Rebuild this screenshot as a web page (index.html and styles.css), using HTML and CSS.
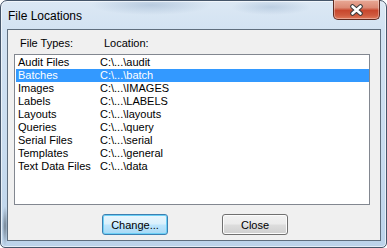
FILE: index.html
```html
<!DOCTYPE html>
<html lang="en">
<head>
    <meta charset="UTF-8">
    <meta name="viewport" content="width=device-width, initial-scale=1.0">
    <title>File Locations</title>
    <link rel="stylesheet" href="styles.css">
</head>
<body>
    <div class="window">
        <div class="titlebar">
            <span class="title">File Locations</span>
            <button class="close-button" title="Close">
                <svg width="15" height="12" viewBox="0 0 15 12">
                    <path d="M3.5 2.5 L11.5 9.5 M11.5 2.5 L3.5 9.5" stroke="#3a3a3a" stroke-width="4.6" stroke-linecap="round" fill="none"/>
                    <path d="M3.5 2.5 L11.5 9.5 M11.5 2.5 L3.5 9.5" stroke="#ffffff" stroke-width="2.6" stroke-linecap="round" fill="none"/>
                </svg>
            </button>
        </div>
        <div class="client">
            <div class="list-header">
                <span class="col-name">File Types:</span>
                <span>Location:</span>
            </div>
            <div class="listbox">
                <div class="row"><span class="col-name">Audit Files</span><span>C:\...\audit</span></div>
                <div class="row selected"><span class="col-name">Batches</span><span>C:\...\batch</span></div>
                <div class="row"><span class="col-name">Images</span><span>C:\...\IMAGES</span></div>
                <div class="row"><span class="col-name">Labels</span><span>C:\...\LABELS</span></div>
                <div class="row"><span class="col-name">Layouts</span><span>C:\...\layouts</span></div>
                <div class="row"><span class="col-name">Queries</span><span>C:\...\query</span></div>
                <div class="row"><span class="col-name">Serial Files</span><span>C:\...\serial</span></div>
                <div class="row"><span class="col-name">Templates</span><span>C:\...\general</span></div>
                <div class="row"><span class="col-name">Text Data Files</span><span>C:\...\data</span></div>
            </div>
            <div class="buttons">
                <button class="btn btn-default">Change...</button>
                <button class="btn">Close</button>
            </div>
        </div>
    </div>
</body>
</html>
```

FILE: styles.css
```css
body {
    margin: 0;
    background-color: #ffffff;
    font-family: "Liberation Sans", Arial, sans-serif;
}
.window {
    width: 387px;
    height: 248px;
    box-sizing: border-box;
    border: 1px solid #46566a;
    border-radius: 7px 7px 5px 5px;
    padding: 0 5px 6px 6px;
    display: flex;
    flex-direction: column;
    background:
        radial-gradient(ellipse 60px 10px at 150px 4px, rgba(120,150,185,0.35), transparent),
        radial-gradient(ellipse 40px 8px at 270px 6px, rgba(120,150,185,0.3), transparent),
        radial-gradient(ellipse 3px 20px at 4px 225px, rgba(40,50,60,0.5), transparent),
        linear-gradient(to bottom, #dce8f4 0%, #d2e2f2 12%, #c9dcef 60%, #bcd3ea 100%);
    box-shadow: inset 0 0 0 1px rgba(255,255,255,0.6);
}
.titlebar {
    height: 28px;
    display: flex;
    align-items: flex-start;
}
.title {
    font-size: 12px;
    line-height: 14px;
    padding-top: 8px;
    margin-left: 1px;
    color: #000;
}
.close-button {
    margin-left: auto;
    margin-top: -1px;
    margin-right: 1px;
    width: 47px;
    height: 20px;
    padding: 0;
    border: 1px solid #5f2a20;
    border-top: none;
    border-radius: 0 0 5px 5px;
    background: linear-gradient(to bottom, #e9a996 0%, #dc8a75 40%, #c8472d 55%, #cf5a3e 80%, #e07a5c 100%);
    box-shadow: inset 0 0 0 1px rgba(255,255,255,0.35);
    display: flex;
    align-items: center;
    justify-content: center;
}
.client {
    flex: 1;
    border: 1px solid #5f6e7e;
    background-color: #f0f0f0;
    font-size: 11px;
    color: #000;
}
.list-header {
    display: flex;
    padding: 7px 0 0 12px;
    line-height: 13px;
}
.list-header .col-name {
    width: 84px;
}
.listbox {
    margin: 4px 0 0 6px;
    width: 356px;
    height: 151px;
    box-sizing: border-box;
    border: 1px solid #828790;
    background-color: #ffffff;
    padding: 1px 0 1px 1px;
}
.row {
    display: flex;
    height: 13px;
    line-height: 13px;
    padding-left: 2px;
    white-space: nowrap;
}
.row .col-name {
    width: 82px;
}
.row.selected {
    background-color: #3399ff;
    color: #ffffff;
}
.buttons {
    display: flex;
    gap: 54px;
    margin-top: 9px;
    padding-left: 94px;
}
.btn {
    width: 66px;
    height: 21px;
    padding: 0;
    font-family: "Liberation Sans", Arial, sans-serif;
    font-size: 11px;
    color: #000;
    border: 1px solid #707070;
    border-radius: 3px;
    background: linear-gradient(to bottom, #f2f2f2 0%, #ebebeb 48%, #dddddd 52%, #cfcfcf 100%);
    box-shadow: inset 0 0 0 1px #fcfcfc;
}
.btn-default {
    border-color: #3c7fb1;
    background: linear-gradient(to bottom, #eaf6fd 0%, #d9f0fc 48%, #bee6fd 52%, #a7d9f5 100%);
    box-shadow: inset 0 0 0 1px #6cd0f6;
}
```
